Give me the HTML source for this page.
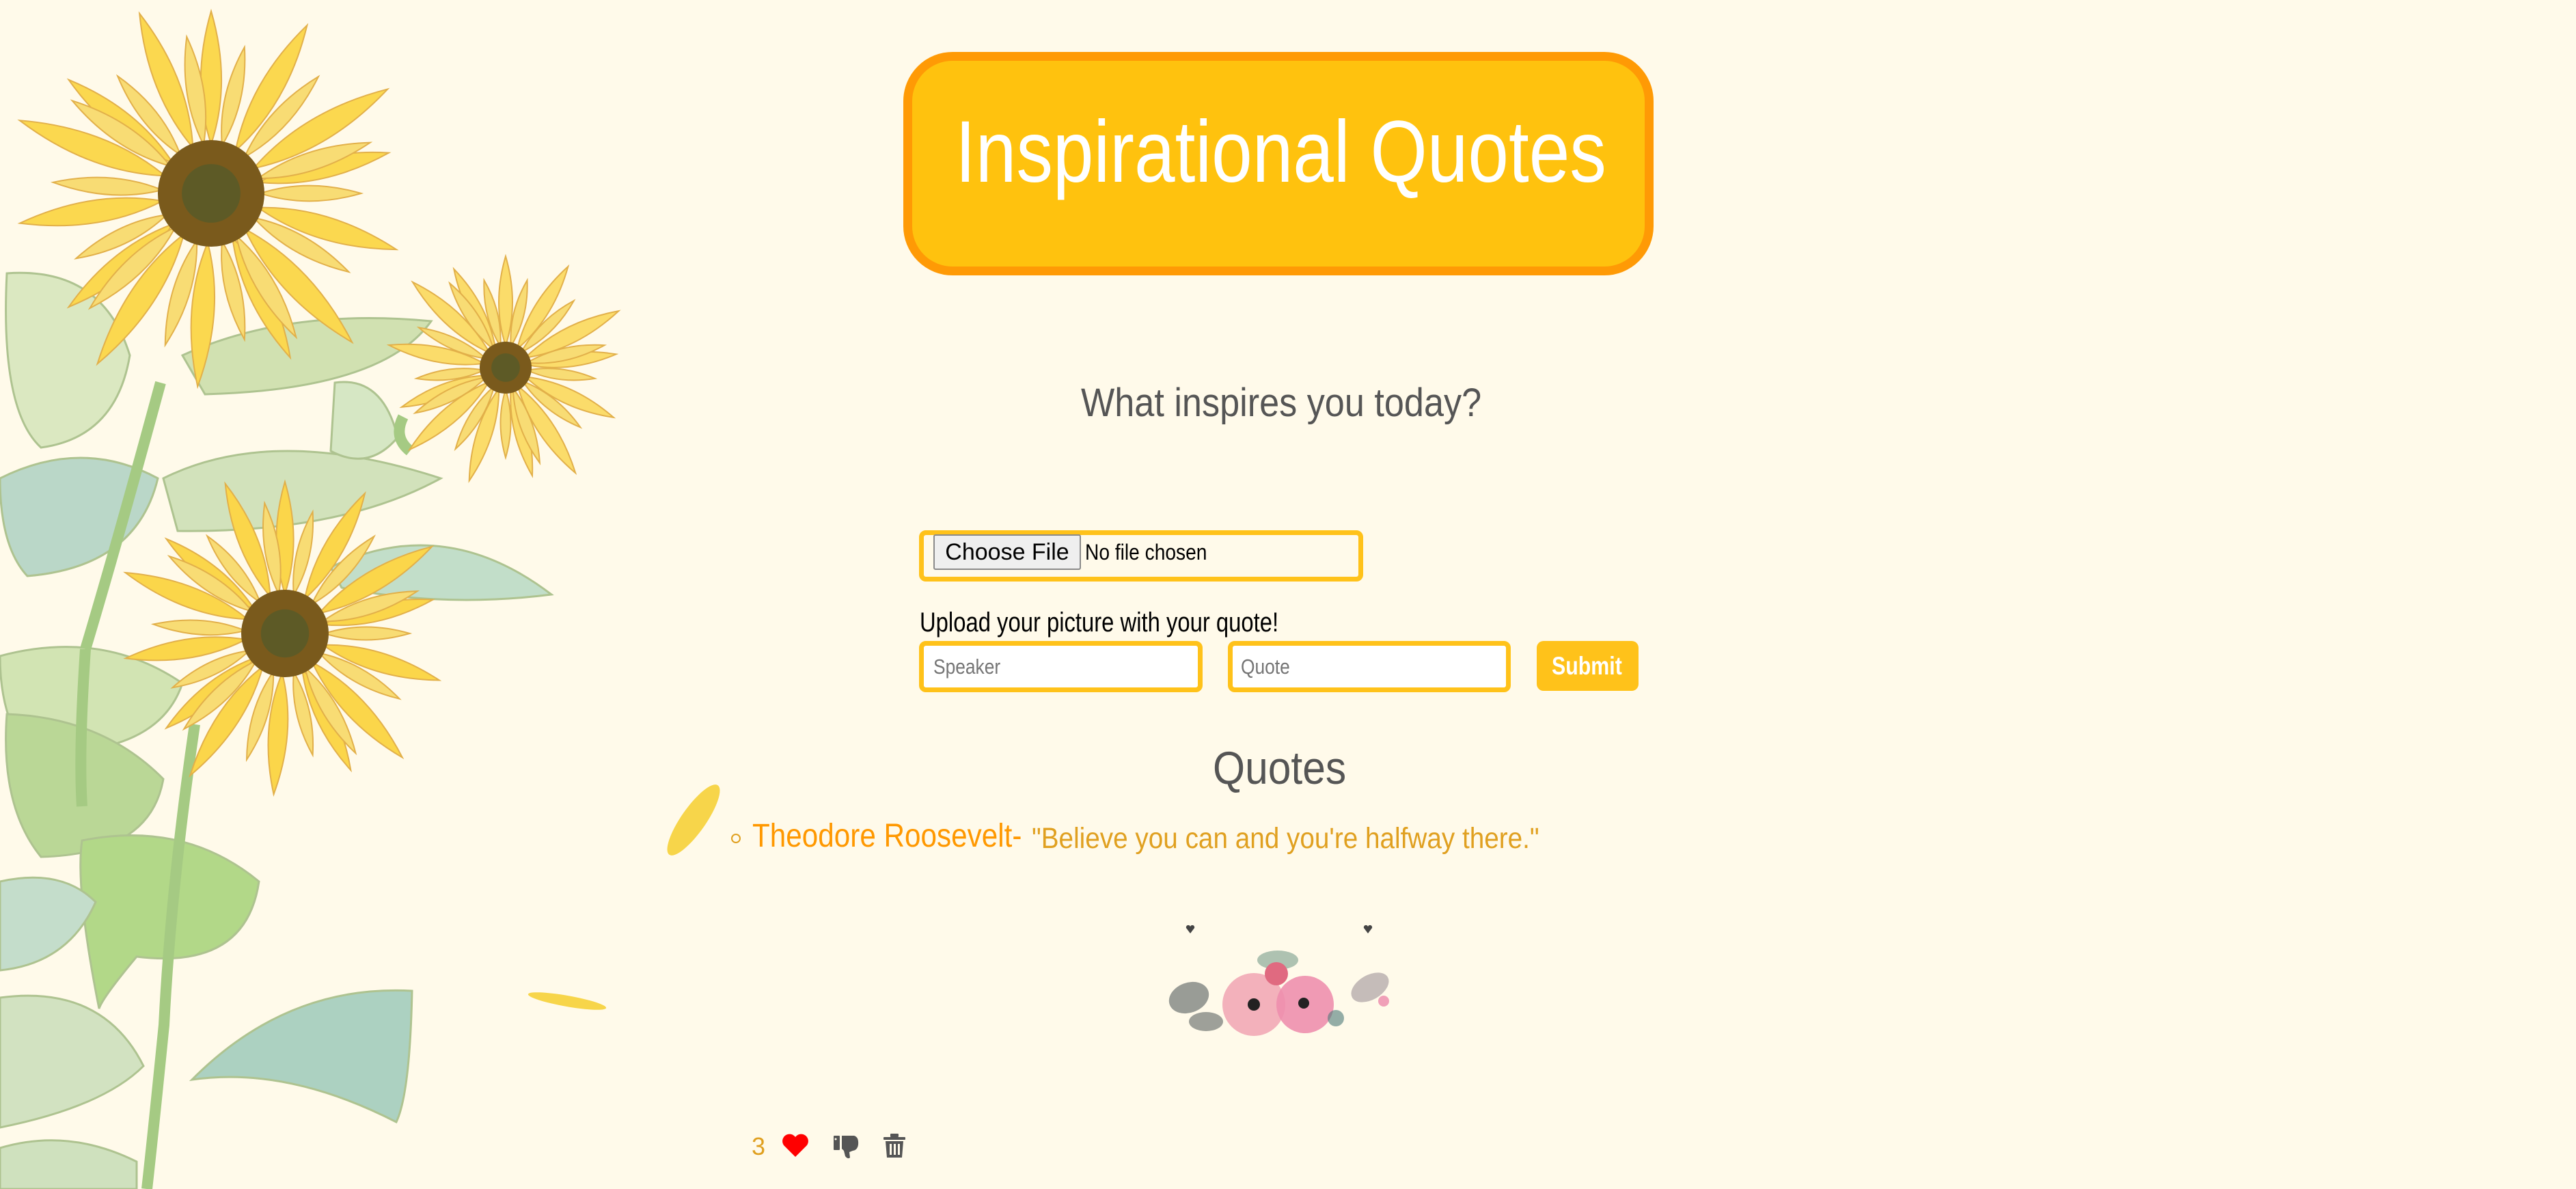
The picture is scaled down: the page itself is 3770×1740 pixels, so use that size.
<!DOCTYPE html>
<html><head><meta charset="utf-8">
<style>
html,body{margin:0;padding:0}
body{width:3770px;height:1740px;background:#fffaea;position:relative;overflow:hidden;font-family:"Liberation Sans",sans-serif}
.a{position:absolute;white-space:nowrap;transform-origin:0 0}
.box{position:absolute;box-sizing:border-box}
</style></head><body>
<svg id="bg" width="3770" height="1740" style="position:absolute;left:0;top:0" xmlns="http://www.w3.org/2000/svg">
<g id="leaves" opacity="0.8">
 <g stroke="#9bb67a" stroke-width="3">
 <path d="M10 400 Q150 390 190 520 Q170 640 60 655 Q0 600 10 400Z" fill="#d3e4b8"/>
 <path d="M267 520 Q420 450 631 470 Q560 570 300 577Z" fill="#c6dca3"/>
 <path d="M0 700 Q120 640 231 700 Q200 830 40 843 Q0 800 0 700Z" fill="#a9cfc0"/>
 <path d="M239 700 Q400 620 645 700 Q500 780 260 777Z" fill="#c7ddb0"/>
 <path d="M484 830 Q650 750 807 870 Q650 890 500 860Z" fill="#b4d8c2"/>
 <path d="M490 560 Q560 550 582 640 Q540 690 484 660Z" fill="#cde3bb"/>
 <path d="M0 960 Q150 920 267 1000 Q230 1110 40 1100 Q0 1050 0 960Z" fill="#c8dfa6"/>
 <path d="M10 1045 Q150 1050 239 1140 Q220 1250 60 1254 Q0 1180 10 1045Z" fill="#a9cf82"/>
 <path d="M120 1230 Q270 1200 379 1290 Q360 1420 200 1400 Q150 1460 145 1476 Q110 1300 120 1230Z" fill="#9fd070"/>
 <path d="M0 1290 Q90 1270 140 1320 Q100 1410 0 1420Z" fill="#b6d6c4"/>
 <path d="M281 1580 Q420 1440 603 1450 Q600 1600 580 1642 Q420 1560 281 1580Z" fill="#98c8b8"/>
 <path d="M0 1460 Q150 1440 210 1560 Q150 1620 0 1650Z" fill="#c7ddb8"/>
 <path d="M0 1680 Q100 1650 200 1700 L200 1740 L0 1740Z" fill="#c4dcb4"/>
 </g>
 <path d="M235 560 Q170 800 125 950 M125 950 Q115 1100 120 1180 M285 1060 Q250 1300 240 1500 Q225 1650 215 1740 M600 660 Q575 640 590 610" stroke="#8fbf6a" stroke-width="16" fill="none"/>
</g>
<g id="flowers"></g>
<ellipse cx="1015" cy="1200" rx="18" ry="62" fill="#f7d54a" transform="rotate(35 1015 1200)"/>
<ellipse cx="830" cy="1465" rx="58" ry="8" fill="#f7d54a" transform="rotate(10 830 1465)"/>
<g>
 <path d="M1736 1358 l6 8 l6 -8 a3 3 0 0 0 -6 -2 a3 3 0 0 0 -6 2z" fill="#444"/>
 <path d="M1996 1358 l6 8 l6 -8 a3 3 0 0 0 -6 -2 a3 3 0 0 0 -6 2z" fill="#444"/>
 <ellipse cx="1740" cy="1460" rx="30" ry="22" fill="#6d7472" opacity=".7" transform="rotate(-20 1740 1460)"/>
 <ellipse cx="1765" cy="1495" rx="25" ry="14" fill="#5d6462" opacity=".6"/>
 <ellipse cx="2005" cy="1445" rx="30" ry="18" fill="#8c7d88" opacity=".5" transform="rotate(-30 2005 1445)"/>
 <ellipse cx="1870" cy="1405" rx="30" ry="14" fill="#5d8a78" opacity=".5"/>
 <circle cx="1835" cy="1470" r="46" fill="#f2a9b6" opacity=".9"/>
 <circle cx="1910" cy="1470" r="42" fill="#ee8fae" opacity=".9"/>
 <circle cx="1868" cy="1425" r="17" fill="#e06a80"/>
 <circle cx="1835" cy="1470" r="9" fill="#222"/>
 <circle cx="1908" cy="1468" r="8" fill="#222"/>
 <circle cx="2025" cy="1465" r="8" fill="#f0a0b8"/>
 <circle cx="1955" cy="1490" r="12" fill="#4d7a78" opacity=".6"/>
</g>
<circle cx="1077" cy="1227" r="6" fill="none" stroke="#e0a020" stroke-width="2"/>
<path d="M1164 1693 L1147 1676 A10 10 0 0 1 1164 1664 A10 10 0 0 1 1181 1676 Z" fill="#f00"/>
<g fill="#555">
 <rect x="1220" y="1662" width="9" height="21" rx="1"/>
 <path d="M1232 1662 H1250 Q1257 1664 1256 1675 Q1255 1683 1248 1684 L1243 1686 L1244 1694 Q1241 1697 1237 1692 L1235 1684 L1232 1681 Z"/>
 <rect x="1293" y="1664" width="32" height="4" rx="1"/>
 <rect x="1303" y="1659" width="12" height="5" rx="1"/>
 <path d="M1296 1670 H1322 L1320 1694 H1298 Z"/>
</g>
<g fill="#fffaea"><rect x="1302" y="1674" width="3" height="16"/><rect x="1308" y="1674" width="3" height="16"/><rect x="1314" y="1674" width="3" height="16"/></g>
<circle cx="1223" cy="1667" r="1.5" fill="#fffaea"/>
</svg>

<div class="box" style="left:1322px;top:76px;width:1098px;height:327px;background:#ffc20e;border:13px solid #ff9a05;border-radius:72px"></div>
<div class="a" style="left:1398px;top:148px;font-size:128px;line-height:150px;color:#fff;transform:scaleX(.837)">Inspirational Quotes</div>
<div class="a" style="left:1582px;top:550px;font-size:58px;line-height:80px;color:#555;transform:scaleX(.9)">What inspires you today?</div>

<div class="box" style="left:1345px;top:776px;width:650px;height:75px;border:7px solid #ffc21a;border-radius:10px;background:#fffaea"></div>
<div class="box" style="left:1366px;top:782px;width:216px;height:52px;background:#efefef;border:2px solid #8a8a8a;border-radius:3px;font-size:34px;line-height:48px;text-align:center;color:#000">Choose File</div>
<div class="a" style="left:1588px;top:786px;font-size:32px;line-height:44px;color:#000;transform:scaleX(.88)">No file chosen</div>
<div class="a" style="left:1346px;top:883px;font-size:40px;line-height:56px;color:#000;transform:scaleX(.82)">Upload your picture with your quote!</div>

<div class="box" style="left:1345px;top:938px;width:415px;height:75px;border:7px solid #ffc21a;border-radius:10px;background:#fff"></div>
<div class="a" style="left:1366px;top:955px;font-size:31px;line-height:42px;color:#757575;transform:scaleX(.85)">Speaker</div>
<div class="box" style="left:1797px;top:938px;width:414px;height:75px;border:7px solid #ffc21a;border-radius:10px;background:#fff"></div>
<div class="a" style="left:1816px;top:955px;font-size:31px;line-height:42px;color:#757575;transform:scaleX(.85)">Quote</div>
<div class="box" style="left:2249px;top:938px;width:149px;height:73px;background:#ffc21a;border-radius:10px"></div>
<div class="a" style="left:2271px;top:951px;font-size:37px;line-height:48px;color:#fff;font-weight:bold;transform:scaleX(.82)">Submit</div>

<div class="a" style="left:1775px;top:1084px;font-size:68px;line-height:80px;color:#555;transform:scaleX(.89)">Quotes</div>
<div class="a" style="left:1101px;top:1196px;font-size:48px;line-height:56px;color:#ff9800;transform:scaleX(.88)">Theodore Roosevelt-</div>
<div class="a" style="left:1510px;top:1202px;font-size:43px;line-height:50px;color:#e0a020;transform:scaleX(.9)">"Believe you can and you're halfway there."</div>
<div class="a" style="left:1100px;top:1658px;font-size:36px;line-height:40px;color:#e0a020">3</div>

<script>
(function(){
var g=document.getElementById('flowers'),h='';
function fl(cx,cy,R,r,n,col){
 for(var k=0;k<2;k++){for(var i=0;i<n;i++){var a=360*i/n+(k?180/n:0)+(i%3)*4;var L=(R-r)*(k?0.75:1)*(0.85+0.15*((i*7)%3)/2);
  h+='<path d="M'+cx+' '+(cy-r+6)+' Q'+(cx-L*0.16)+' '+(cy-r-L*0.45)+' '+cx+' '+(cy-r-L)+' Q'+(cx+L*0.16)+' '+(cy-r-L*0.45)+' '+cx+' '+(cy-r+6)+'Z" fill="'+(k?'#f8dc74':col)+'" stroke="#e2b04a" stroke-width="2" transform="rotate('+a+' '+cx+' '+cy+')"/>';}}
 h+='<circle cx="'+cx+'" cy="'+cy+'" r="'+r+'" fill="#7a5a1c"/><circle cx="'+cx+'" cy="'+cy+'" r="'+(r*0.55)+'" fill="#5d5a26"/>';
}
fl(309,283,300,78,14,'#fbd84f');
fl(740,538,185,38,13,'#fbdc6a');
fl(417,927,250,64,14,'#fbd64a');
g.innerHTML=h;
})();
</script>
</body></html>
